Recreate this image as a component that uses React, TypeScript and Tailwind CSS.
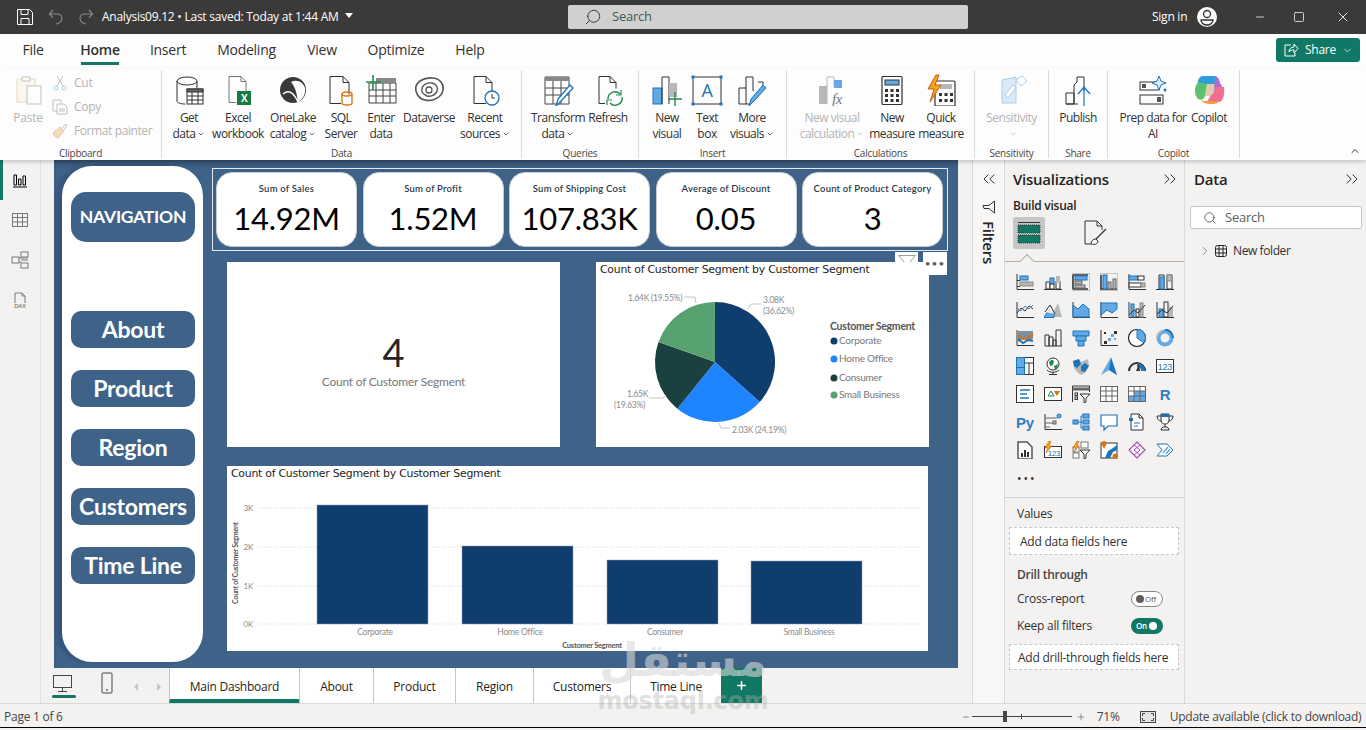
import type { ReactNode } from "react";
import { ChevronDown, ChevronRight, ChevronsLeft, ChevronsRight, ChevronUp, Minus, Plus, Search, Square, X } from "lucide-react";

const k = "#323130";
const b = "#62a9e6";
const d = "#1b75bb";
const g = "#b9b7b5";

function Ico({ s = 32, v = 32, dim = false, children }: { s?: number; v?: number; dim?: boolean; children: ReactNode }) {
  return (
    <svg width={s} height={s} viewBox={`0 0 ${v} ${v}`} fill="none" stroke={k} strokeWidth={1} className={dim ? "opacity-35 shrink-0" : "shrink-0"}>
      {children}
    </svg>
  );
}

const ribbonIcons: Record<string, ReactNode> = {
  getdata: (
    <>
      <path d="M4 7v20c0 1.5 3 3 8 3 M24 7v8" />
      <ellipse cx="14" cy="7" rx="10" ry="4" />
      <rect x="14" y="15" width="16" height="15" fill="#fff" />
      <path d="M14 15h16v3H14z" fill="#666" />
      <path d="M14 22h16M14 26h16M19 18v12M25 18v12" />
    </>
  ),
  excel: (
    <>
      <path d="M7 2.5h12l5 5v13 M7 2.5v26h7 M19 2.5v5h5" stroke="#777" />
      <rect x="15" y="17" width="14" height="14" fill="#177a41" stroke="none" />
      <text x="22" y="28" fontSize="10" fontWeight="700" fill="#fff" stroke="none" textAnchor="middle">X</text>
    </>
  ),
  onelake: (
    <>
      <circle cx="16" cy="16" r="13" fill="#3a3a3a" stroke="none" />
      <path d="M14 8c6-3 12 0 14 6 1 6-2 11-7 14-1-7-2-14-7-20z" fill="#fff" stroke="none" />
      <path d="M6 20c5-4 10-3 15 8" stroke="#fff" strokeWidth={1.5} />
    </>
  ),
  sql: (
    <>
      <path d="M5 2.5h13l6 6v12 M5 2.5v27h11 M18 2.5v6h6" />
      <path d="M17 20v9c0 1 2 2 5 2s5-1 5-2v-9" stroke="#d9730d" strokeWidth={1.3} />
      <ellipse cx="22" cy="20" rx="5" ry="2" stroke="#d9730d" strokeWidth={1.3} />
    </>
  ),
  enter: (
    <>
      <path d="M4 9h27v20H4z" stroke="#444" />
      <path d="M11 4h20v5H11z" fill="#888" stroke="none" />
      <path d="M4 16h27M4 22h27M11 9v20M18 9v20M25 9v20" stroke="#444" />
      <path d="M8 1v15M1 8h15" stroke="#218a4c" strokeWidth={1.6} />
    </>
  ),
  dataverse: (
    <>
      <path d="M3 17C1 8 11 3 20 4c8 1 11 7 10 12-1 7-10 12-18 10-5-1-8-5-9-9z" stroke="#555" strokeWidth={1.6} />
      <path d="M9 17c-1-5 4-9 10-8 5 1 6 5 5 8-1 4-7 6-10 5-2-1-5-3-5-5z" stroke="#555" strokeWidth={1.4} />
      <circle cx="16" cy="16" r="3" stroke="#555" strokeWidth={1.3} />
    </>
  ),
  recent: (
    <>
      <path d="M5 2.5h12l6 6v10 M5 2.5v27h12 M17 2.5v6h6" />
      <circle cx="23" cy="24" r="7" fill="#fff" stroke="#1b75bb" strokeWidth={1.3} />
      <path d="M23 20v4h3" stroke="#333" />
    </>
  ),
  transform: (
    <>
      <path d="M3 3h24v27H3z" stroke="#444" />
      <path d="M3 3h24v4H3z" fill="#888" stroke="none" />
      <path d="M3 14h24M3 21h24M11 7v23M19 7v23" stroke="#444" />
      <path d="M14 32l2-7 12-14 3 3-12 13z" fill="#fff" stroke="#1b75bb" strokeWidth={1.3} />
    </>
  ),
  refresh: (
    <>
      <path d="M7 2.5h11l6 6v6 M7 2.5v27h6 M18 2.5v6h6" />
      <path d="M16 25a7 7 0 0 1 12-5 M30 23a7 7 0 0 1-12 6" stroke="#218a4c" strokeWidth={1.4} />
      <path d="M29 16v5h-5 M15 31v-5h5" stroke="#218a4c" strokeWidth={1.2} />
    </>
  ),
  newvisual: (
    <>
      <rect x="2" y="14" width="9" height="16" fill={b} stroke={d} />
      <path d="M11 30V3h7v27" />
      <rect x="18" y="9" width="8" height="14" fill={g} stroke="none" />
      <path d="M24 18v14M17 25h14" stroke="#218a4c" strokeWidth={1.4} />
    </>
  ),
  textbox: (
    <>
      <rect x="2" y="3" width="28" height="27" stroke="#333" />
      <rect x="0.5" y="1.5" width="3" height="3" fill={d} stroke="none" />
      <rect x="28.5" y="1.5" width="3" height="3" fill={d} stroke="none" />
      <rect x="0.5" y="28.5" width="3" height="3" fill={d} stroke="none" />
      <rect x="28.5" y="28.5" width="3" height="3" fill={d} stroke="none" />
      <text x="16" y="23" fontSize="18" fill={d} stroke="none" textAnchor="middle">A</text>
    </>
  ),
  more: (
    <>
      <path d="M3 30V14h7 M10 30V3h7v14 M22 8h5v6 M3 30h12" />
      <path d="M13 32l2-7 12-14 3 3-12 13z" fill={b} stroke={d} />
    </>
  ),
  newcalc: (
    <>
      <rect x="3" y="12" width="8" height="18" fill={g} stroke="none" />
      <path d="M11 30V3h7v10" stroke={g} />
      <rect x="18" y="6" width="8" height="8" fill={b} stroke="none" />
      <text x="21" y="30" fontSize="15" fontStyle="italic" fontFamily="Liberation Serif" fill="#777" stroke="none" textAnchor="middle">fx</text>
    </>
  ),
  measure: (
    <>
      <rect x="6" y="2.5" width="20" height="28" rx="1" strokeWidth={1.2} />
      <rect x="9" y="6" width="14" height="5" fill={b} stroke="#333" />
      <path d="M9 15h3v3H9zM14.500 15h3v3h-3zM20 15h3v3h-3zM9 20h3v3H9zM14.500 20h3v3h-3zM20 20h3v3h-3zM9 25h3v3H9zM14.500 25h3v3h-3zM20 25h3v3h-3z" fill="#333" stroke="none" />
    </>
  ),
  quick: (
    <>
      <rect x="10" y="7" width="20" height="25" rx="1" strokeWidth={1.2} />
      <rect x="15" y="10" width="12" height="5" fill={g} stroke="none" />
      <path d="M14 19h3v3h-3zM19.500 19h3v3h-3zM25 19h3v3h-3zM14 25h3v3h-3zM19.500 25h3v3h-3zM25 25h3v3h-3z" fill="#333" stroke="none" />
      <path d="M11 1L3 15h6L5 28l11-17h-6l4-10z" fill="#f2a31f" stroke="#c8610e" />
    </>
  ),
  sensitivity: (
    <>
      <path d="M6 6l14-3v26H6z" fill="#d9e9f7" stroke="#a9cdea" />
      <path d="M9 21l8-10 3 2-8 11z" fill="#fff" stroke="#a9cdea" />
      <path d="M20 6l6-4 5 5-6 5z" fill="#fff" stroke="#a9cdea" />
    </>
  ),
  publish: (
    <>
      <path d="M4 30V19h8v11z M12 30V11l3-3V3h7v14 M4 30h12" />
      <path d="M22 32V13M16 20l6-7 6 7" stroke={d} strokeWidth={1.2} />
    </>
  ),
  prep: (
    <>
      <rect x="3" y="8" width="19" height="8" stroke="#333" />
      <rect x="3" y="21" width="23" height="9" stroke="#333" />
      <rect x="5" y="10" width="4" height="4" fill="#555" stroke="none" />
      <rect x="20" y="23" width="4" height="5" fill="#555" stroke="none" />
      <path d="M22 2l2 5 5 2-5 2-2 5-2-5-5-2 5-2z" fill="#d9ecfa" stroke={d} />
      <circle cx="28" cy="16" r="1.500" fill={d} stroke="none" />
    </>
  ),
  copilot: (
    <>
      <path d="M10 2h11c4 0 5 3 6 8H14c-4 0-6 4-7 8L5 8c0-3 2-6 5-6z" fill="#2a9fe0" stroke="none" />
      <path d="M5 8c-4 5-4 13 0 17 3 2 6 0 7-3l2-12-9-2z" fill="#5fbf71" stroke="none" />
      <path d="M21 2c3 0 5 3 6 7 4 5 4 12 1 15l-6 1-1-12 1-9z" fill="#b16bd6" stroke="none" />
      <path d="M22 13h9c1 7-1 15-5 15H14l4-7c3-1 4-5 4-8z" fill="#ee6f93" stroke="none" />
      <path d="M5 22c2 4 6 8 11 8h4c3 0 5-1 6-3H12c-2 0-6-1-7-5z" fill="#f49b3c" stroke="none" />
      <path d="M14 10h8l-1 9-4 3h-5z" fill="#c9a26d" stroke="none" opacity={0.55} />
    </>
  ),
};

type Item = { w: string; icon: string; lines: [string, string?]; caret?: boolean; dim?: boolean };
type Group = { w: string; pl: string; label: string; items: Item[] };

const groups: Group[] = [
  {
    w: "w-[360px]",
    pl: "pl-[7px]",
    label: "Data",
    items: [
      { w: "w-[40px]", icon: "getdata", lines: ["Get", "data"], caret: true },
      { w: "w-[58px]", icon: "excel", lines: ["Excel", "workbook"] },
      { w: "w-[52px]", icon: "onelake", lines: ["OneLake", "catalog"], caret: true },
      { w: "w-[44px]", icon: "sql", lines: ["SQL", "Server"] },
      { w: "w-[36px]", icon: "enter", lines: ["Enter", "data"] },
      { w: "w-[60px]", icon: "dataverse", lines: ["Dataverse"] },
      { w: "w-[52px]", icon: "recent", lines: ["Recent", "sources"], caret: true },
    ],
  },
  {
    w: "w-[117px]",
    pl: "pl-[8px]",
    label: "Queries",
    items: [
      { w: "w-[56px]", icon: "transform", lines: ["Transform", "data"], caret: true },
      { w: "w-[44px]", icon: "refresh", lines: ["Refresh"] },
    ],
  },
  {
    w: "w-[148px]",
    pl: "pl-[8px]",
    label: "Insert",
    items: [
      { w: "w-[40px]", icon: "newvisual", lines: ["New", "visual"] },
      { w: "w-[40px]", icon: "textbox", lines: ["Text", "box"] },
      { w: "w-[50px]", icon: "more", lines: ["More", "visuals"], caret: true },
    ],
  },
  {
    w: "w-[188px]",
    pl: "pl-[8px]",
    label: "Calculations",
    items: [
      { w: "w-[74px]", icon: "newcalc", lines: ["New visual", "calculation"], caret: true, dim: true },
      { w: "w-[46px]", icon: "measure", lines: ["New", "measure"] },
      { w: "w-[52px]", icon: "quick", lines: ["Quick", "measure"] },
    ],
  },
  {
    w: "w-[74px]",
    pl: "pl-[0px]",
    label: "Sensitivity",
    items: [{ w: "w-[73px]", icon: "sensitivity", lines: ["Sensitivity", ""], caret: true, dim: true }],
  },
  {
    w: "w-[59px]",
    pl: "pl-[0px]",
    label: "Share",
    items: [{ w: "w-[58px]", icon: "publish", lines: ["Publish"] }],
  },
  {
    w: "w-[132px]",
    pl: "pl-[6px]",
    label: "Copilot",
    items: [
      { w: "w-[78px]", icon: "prep", lines: ["Prep data for", "AI"] },
      { w: "w-[34px]", icon: "copilot", lines: ["Copilot"] },
    ],
  },
];

function RibbonItem({ item }: { item: Item }) {
  return (
    <div className={`${item.w} flex flex-col items-center shrink-0 tracking-[-0.5px] ${item.dim ? "text-[#b5b3b1]" : "text-[#323130]"}`}>
      <div className="h-[33px] mt-[3px] flex items-center justify-center">
        <Ico>{ribbonIcons[item.icon]}</Ico>
      </div>
      <div className="mt-[4px] text-[12px] leading-[16px] text-center whitespace-nowrap">{item.lines[0]}</div>
      {item.lines[1] !== undefined && (
        <div className="text-[12px] leading-[16px] text-center whitespace-nowrap flex items-center justify-center h-[16px]">
          {item.lines[1]}
          {item.caret && <ChevronDown size={8} strokeWidth={2} className="ml-[2px]" />}
        </div>
      )}
    </div>
  );
}

function Clipboard() {
  return (
    <div className="w-[162px] h-[88px] border-r border-[#dcdad8] flex flex-col shrink-0">
      <div className="flex flex-1 text-[#b5b3b1] text-[12px]">
        <div className="w-[46px] pl-[10px] flex flex-col items-center">
          <div className="h-[33px] mt-[3px] flex items-center">
            <Ico dim>
              <path d="M5 5h18v23H5z" fill="#fbeecf" stroke="#c89b3c" />
              <path d="M10 3h8v4h-8z" fill="#fff" stroke="#555" />
              <rect x="15" y="12" width="14" height="18" fill="#fff" stroke="#555" />
            </Ico>
          </div>
          <div className="mt-[4px] leading-[16px]">Paste</div>
        </div>
        <div className="pl-[6px] flex flex-col gap-[4px] pt-[3px]">
          <div className="flex items-center gap-[6px] h-[20px]">
            <Ico s={16} v={16} dim>
              <path d="M5 1l6 10M11 1L5 11" stroke="#555" />
              <circle cx="4" cy="13" r="2" stroke={d} />
              <circle cx="12" cy="13" r="2" stroke={d} />
            </Ico>
            Cut
          </div>
          <div className="flex items-center gap-[6px] h-[20px]">
            <Ico s={16} v={16} dim>
              <path d="M1 1h8v3M1 1v11h4" stroke="#555" />
              <path d="M5 5h7l3 3v7H5zM7 10h6M7 12h6" stroke="#555" />
            </Ico>
            Copy
          </div>
          <div className="flex items-center gap-[6px] h-[20px] whitespace-nowrap tracking-[-0.4px]">
            <Ico s={16} v={16} dim>
              <path d="M1 10l7-6 4 4-6 7c-2 0-4-2-5-5z" fill="#e8a33a" stroke="#c8610e" />
              <path d="M10 5l4-4 1 1-3 5" stroke="#555" />
            </Ico>
            Format painter
          </div>
        </div>
      </div>
      <div className="text-[10px] leading-[14px] text-center text-[#484644] mb-[-2px]">Clipboard</div>
    </div>
  );
}

function Ribbon() {
  return (
    <div className="h-[92px] bg-[#fdfdfd] shadow-[0_2px_4px_rgba(0,0,0,0.18)] relative z-10 flex pt-[2px] shrink-0">
      <Clipboard />
      {groups.map((gr) => (
        <div key={gr.label} className={`${gr.w} h-[88px] border-r border-[#dcdad8] flex flex-col shrink-0`}>
          <div className={`flex flex-1 ${gr.pl}`}>
            {gr.items.map((it) => (
              <RibbonItem key={it.icon} item={it} />
            ))}
          </div>
          <div className="text-[10px] leading-[14px] text-center text-[#484644] mb-[-2px]">{gr.label}</div>
        </div>
      ))}
      <ChevronUp size={12} strokeWidth={2} className="absolute right-[5px] bottom-[3px] text-[#323130]" />
    </div>
  );
}

function TitleBar() {
  return (
    <div className="h-[34px] bg-[#3b3a39] flex items-center text-white shrink-0 relative">
      <svg width="18" height="18" viewBox="0 0 18 18" fill="none" stroke="#fff" className="ml-[16px] shrink-0">
        <path d="M1.500 1.500h12l3 3v12h-15z M5 1.500v5h7v-5 M5 16.500v-6h8v6" />
      </svg>
      <svg width="16" height="16" viewBox="0 0 16 16" fill="none" stroke="#8a8886" strokeWidth={1.2} className="ml-[14px] shrink-0">
        <path d="M5 1L1.500 5 5 8.500 M2 5h7c3 0 5 2 5 4.500S11 15 8 15" />
      </svg>
      <svg width="16" height="16" viewBox="0 0 16 16" fill="none" stroke="#8a8886" strokeWidth={1.2} className="ml-[14px] shrink-0">
        <path d="M11 1l3.500 4L11 8.500 M14 5H7C4 5 2 7 2 9.500S5 15 8 15" />
      </svg>
      <div className="ml-[8px] text-[12px] whitespace-nowrap w-[243px] font-medium">Analysis09.12 • Last saved: Today at 1:44 AM</div>
      <div className="w-0 h-0 border-x-[4px] border-x-transparent border-t-[5px] border-t-white mb-[4px]" />
      <div className="ml-[215px] w-[400px] h-[24px] bg-[#d2d0ce] rounded-[2px] flex items-center text-[#3b5b57] text-[13px] shrink-0">
        <Search size={18} strokeWidth={1.2} className="ml-[16px] mr-[10px] text-[#323130] -scale-x-100" />
        Search
      </div>
      <div className="ml-[184px] text-[12px] whitespace-nowrap font-medium">Sign in</div>
      <svg width="22" height="22" viewBox="0 0 22 22" className="ml-[9px] shrink-0">
        <circle cx="11" cy="11" r="10" fill="#fff" />
        <circle cx="11" cy="8" r="3.500" fill="none" stroke="#323130" strokeWidth={1.3} />
        <path d="M5 14h12c0 3-3 5-6 5s-6-2-6-5z" fill="none" stroke="#323130" strokeWidth={1.3} />
      </svg>
      <Minus size={12} strokeWidth={1.5} className="ml-[36px]" />
      <Square size={12} strokeWidth={1.5} className="ml-[27px]" />
      <X size={16} strokeWidth={1.3} className="ml-[30px]" />
    </div>
  );
}

const tabs: [string, string][] = [
  ["File", "w-[20px] mr-[38px]"],
  ["Home", "w-[38px] mr-[32px]"],
  ["Insert", "w-[34px] mr-[32px]"],
  ["Modeling", "w-[59px] mr-[31px]"],
  ["View", "w-[30px] mr-[31px]"],
  ["Optimize", "w-[56px] mr-[32px]"],
  ["Help", "w-[28px]"],
];

function MenuTabs() {
  return (
    <div className="h-[34px] bg-[#fdfdfd] flex pl-[23px] text-[14px] text-[#323130] relative shrink-0">
      {tabs.map(([name, cls]) => (
        <div key={name} className={`${cls} h-[31px] flex items-center justify-center whitespace-nowrap shrink-0 ${name === "Home" ? "border-b-[3px] border-[#117865] font-semibold pt-[3px]" : "pt-0"}`}>
          {name}
        </div>
      ))}
      <div className="absolute right-[6px] top-[4px] w-[84px] h-[24px] bg-[#117865] rounded-[3px] text-white text-[12px] flex items-center justify-center gap-[6px]">
        <svg width="16" height="16" viewBox="0 0 16 16" fill="none" stroke="#fff">
          <path d="M8 3H2v11h10v-3 M6 10c0-3 2-5 5-5V2l4 4.500L11 11V8c-2 0-4 0-5 2z" />
        </svg>
        Share
        <ChevronDown size={11} strokeWidth={1.5} />
      </div>
    </div>
  );
}

const kpis = [
  ["Sum of Sales", "14.92M"],
  ["Sum of Profit", "1.52M"],
  ["Sum of Shipping Cost", "107.83K"],
  ["Average of Discount", "0.05"],
  ["Count of Product Category", "3"],
];

const navItems = ["About", "Product", "Region", "Customers", "Time Line"];

const pieData = [
  { pct: 36.62, color: "#0f3d6e" },
  { pct: 24.19, color: "#1e84ff" },
  { pct: 19.63, color: "#1a4140" },
  { pct: 19.55, color: "#58a272" },
];

function pieSlices(cx: number, cy: number, r: number) {
  let a = 0;
  return pieData.map((s) => {
    const a0 = a;
    a += (s.pct / 100) * Math.PI * 2;
    const x0 = cx + r * Math.sin(a0);
    const y0 = cy - r * Math.cos(a0);
    const x1 = cx + r * Math.sin(a);
    const y1 = cy - r * Math.cos(a);
    return { color: s.color, d: `M${cx} ${cy}L${x0} ${y0}A${r} ${r} 0 ${s.pct > 50 ? 1 : 0} 1 ${x1} ${y1}Z` };
  });
}

function PieCard() {
  const lbl = { fontSize: 8.5, fill: "#8a8a8a" };
  const leg = { fontSize: 10, fill: "#777" };
  return (
    <svg width="333" height="185" className="bg-white font-['Lato',sans-serif] shrink-0">
      <text x="4" y="11" fontSize="10.900" fill="#252423" fontFamily="DejaVu Sans">Count of Customer Segment by Customer Segment</text>
      {pieSlices(119, 100, 60).map((s) => (
        <path key={s.color} d={s.d} fill={s.color} />
      ))}
      <g fill="none" stroke="#c8c6c4">
        <path d="M152 47l3-5h10" />
        <path d="M88 35h11l1 6" />
        <path d="M53 136h14l3-3" />
        <path d="M123 161l2 5h9" />
      </g>
      <text x="167" y="41" {...lbl}>3.08K</text>
      <text x="167" y="52" {...lbl}>(36.62%)</text>
      <text x="32" y="39" {...lbl}>1.64K (19.55%)</text>
      <text x="31" y="135" {...lbl}>1.65K</text>
      <text x="18" y="146" {...lbl}>(19.63%)</text>
      <text x="136" y="171" {...lbl}>2.03K (24.19%)</text>
      <text x="234" y="68" fontSize="10.500" fontWeight="700" fill="#555">Customer Segment</text>
      {[
        ["Corporate", 79, "#0f3d6e"],
        ["Home Office", 97, "#1e84ff"],
        ["Consumer", 116, "#1a4140"],
        ["Small Business", 133, "#58a272"],
      ].map(([name, y, c]) => (
        <g key={name as string}>
          <circle cx="238" cy={y as number} r="3.500" fill={c as string} />
          <text x="243" y={(y as number) + 3} {...leg}>{name}</text>
        </g>
      ))}
    </svg>
  );
}

function BarCard() {
  const bars = [
    { x: 90, top: 39, name: "Corporate" },
    { x: 235, top: 80, name: "Home Office" },
    { x: 380, top: 94, name: "Consumer" },
    { x: 524, top: 95, name: "Small Business" },
  ];
  const ticks = [
    ["3K", 42],
    ["2K", 81],
    ["1K", 120],
    ["0K", 158],
  ] as const;
  return (
    <svg width="701" height="185" className="bg-white font-['Lato',sans-serif] shrink-0">
      <text x="4" y="11" fontSize="10.900" fill="#252423" fontFamily="DejaVu Sans">Count of Customer Segment by Customer Segment</text>
      {ticks.map(([label, y]) => (
        <g key={label}>
          <line x1="32" x2="695" y1={y} y2={y} stroke="#d5d3d1" strokeDasharray="1 2" />
          <text x="26" y={y + 3} fontSize="8" fill="#8a8a8a" textAnchor="end">{label}</text>
        </g>
      ))}
      {bars.map((bar) => (
        <g key={bar.name}>
          <rect x={bar.x} y={bar.top} width="111" height={158 - bar.top} fill="#0f3d6e" stroke="#8ca3bd" strokeWidth={0.5} />
          <text x={bar.x + 58} y="169" fontSize="8.500" fill="#8a8a8a" textAnchor="middle">{bar.name}</text>
        </g>
      ))}
      <text x="365" y="182" fontSize="7.500" fontWeight="700" fill="#555" textAnchor="middle">Customer Segment</text>
      <text transform="translate(11 97) rotate(-90)" fontSize="7" fontWeight="700" fill="#555" textAnchor="middle">Count of Customer Segment</text>
    </svg>
  );
}

function ReportPage() {
  return (
    <div className="w-[904px] h-[508px] bg-[#3f6289] relative flex pl-[8px] pt-[6px] gap-[9px] font-['Lato',sans-serif] shadow-[inset_0_6px_6px_-3px_rgba(0,0,0,0.25)]">
      <div className="w-[141px] h-[496px] bg-white rounded-[30px] pl-[9px] pt-[26px] flex flex-col items-start shadow-[-6px_0_3px_rgba(30,50,80,0.25)]">
        <div className="w-[124px] h-[50px] bg-[#3f6289] rounded-[15px] text-white font-bold text-[17.500px] flex items-center justify-center mb-[69px]">NAVIGATION</div>
        <div className="flex flex-col gap-[22px]">
          {navItems.map((n) => (
            <div key={n} className="w-[124px] h-[37px] bg-[#3f6289] rounded-[10px] text-white font-bold text-[23px] flex items-center justify-center whitespace-nowrap">
              {n}
            </div>
          ))}
        </div>
      </div>
      <div className="w-[736px]">
        <div className="mt-[2px] h-[83px] border border-[#e4e8ee] flex items-center pl-[3px] gap-[5.500px]">
          {kpis.map(([label, val]) => (
            <div key={label} className="w-[141px] h-[75px] bg-white rounded-[16px] border border-[#c8ccd2] flex flex-col items-center shrink-0">
              <div className="mt-[9px] text-[9.500px] font-semibold text-[#2b3a4a] tracking-[0.2px] whitespace-nowrap">{label}</div>
              <div className="text-[31px] leading-[38px] mt-[3px] text-black whitespace-nowrap">{val}</div>
            </div>
          ))}
        </div>
        <div className="pl-[15px] pt-[11px]">
          <div className="flex gap-[36px]">
            <div className="w-[333px] h-[185px] bg-white flex flex-col items-center justify-center shrink-0 pt-[16px]">
              <div className="text-[38px] leading-[42px] text-[#252423] mt-[-4px]">4</div>
              <div className="text-[12px] text-[#777] whitespace-nowrap">Count of Customer Segment</div>
            </div>
            <PieCard />
          </div>
          <div className="mt-[19px]">
            <BarCard />
          </div>
        </div>
      </div>
      <div className="absolute left-[841px] top-[92px] w-[23px] h-[10px] bg-white flex justify-center overflow-hidden">
        <svg width="20" height="12" viewBox="0 0 20 12" fill="none" stroke="#a19f9d" className="mt-[3px]">
          <path d="M1.500 .5h17L12 8v4H8V8z" />
        </svg>
      </div>
      <div className="absolute left-[869px] top-[92px] w-[24px] h-[23px] bg-white flex items-center justify-center text-[#605e5c] text-[10px] tracking-[1px]">•••</div>
    </div>
  );
}

const A = <path d="M1 1v15.500h17" stroke={k} />;
const vizIcons: ReactNode[] = [
  <>{A}<rect x="4" y="3" width="8" height="4" fill={b} stroke={d} /><rect x="4" y="9" width="13" height="4" fill={g} stroke="#888" /><path d="M1 7.500h3M1 13.500h3" /></>,
  <><path d="M0 16.500h18" /><path d="M2 16V9h4v7zM12 16V8h4v8z" /><rect x="6" y="5" width="4" height="6" fill={b} stroke={d} /><rect x="12" y="3" width="4" height="7" fill={g} stroke="none" /><rect x="6" y="11" width="4" height="5" fill="#fff" /></>,
  <><rect x="0" y="0" width="18" height="18" fill="none" stroke={g} strokeWidth={1.5} /><path d="M1 2h15M1 16h15M1 2v14" strokeWidth={1.5} /><rect x="3" y="3" width="12" height="4" fill={b} stroke={d} /><rect x="3" y="8" width="7" height="3" fill={g} stroke="#666" /><rect x="3" y="12" width="10" height="3" fill={g} stroke="#666" /></>,
  <><rect x="0" y="0" width="18" height="18" fill="none" stroke={g} strokeWidth={1.5} /><path d="M1 2v14h16" strokeWidth={1.5} /><rect x="3" y="2" width="4" height="14" fill={b} stroke={d} /><rect x="8" y="9" width="3" height="7" fill={g} stroke="#666" /><rect x="13" y="6" width="3" height="10" fill={g} stroke="#666" /></>,
  <>{A}<rect x="1" y="3" width="9" height="4" fill={b} stroke={d} /><rect x="10" y="3" width="6" height="4" fill="#fff" /><rect x="1" y="10" width="12" height="4" fill="#fff" /><rect x="13" y="10" width="4" height="4" fill={g} stroke="#888" /></>,
  <><path d="M0 16.500h18" /><path d="M3 16V2h5v14zM11 16V2h5v14z" /><rect x="4" y="4" width="4" height="12" fill={b} stroke={d} /><rect x="11" y="2" width="5" height="6" fill={g} stroke="#888" /></>,

  <>{A}<path d="M1 12l4-5 4 3 4-5 4 3" stroke={k} /><path d="M1 7l4 3 4-5 4 3 4-4" stroke="#4a86c5" /></>,
  <><path d="M1 16l5-11 4 5 4-8 4 14z" fill={g} stroke="none" /><path d="M0 16.500l5-8 5 4v4z" fill={b} stroke={d} /><path d="M1 11l5-7 5 9" stroke={k} fill="#fff" fillOpacity={0.8} /></>,
  <>{A}<path d="M1 4l5 4 5-5 6 5v8H1z" fill={b} stroke={d} /></>,
  <>{A}<path d="M1 2h16v6l-5 4-5-3-6 5z" fill={b} stroke={d} /></>,
  <>{A}<rect x="3" y="3" width="3" height="13" fill={b} stroke={d} /><rect x="8" y="8" width="3" height="8" /><rect x="12" y="2" width="3" height="14" fill={g} stroke="#888" /><path d="M1 14l5-5 4 3 7-8" /></>,
  <>{A}<rect x="3" y="8" width="4" height="8" fill={b} stroke={d} /><rect x="8" y="1" width="4" height="15" /><rect x="13" y="6" width="4" height="10" fill={g} stroke="none" /><path d="M1 13l5-4 5 3 6-7" /></>,

  <>{A}<path d="M2 2h15v8l-5 2-5-2-5 3z" fill="#7a8ea6" stroke="none" /><path d="M2 6l5 4 5-1 5-4" stroke="#d9730d" strokeWidth={2} /><path d="M2 10l5 4 5-3 5 1" stroke={d} strokeWidth={2} /></>,
  <><path d="M1 17V6h4v11M5 17V8h4v9M9 17v-6h3v6M12 17V1h5v16M1 17h17" /></>,
  <><path d="M1 2h16v5H1z" fill={b} stroke={d} /><path d="M4 7h10v5H4z" fill={b} stroke={d} /><path d="M6 12h6v5H6z" fill={b} stroke={d} /></>,
  <>{A}<rect x="4" y="12" width="3" height="3" fill={k} stroke="none" /><rect x="11" y="5" width="3" height="3" fill={b} stroke="none" /><rect x="8" y="9" width="3" height="3" fill={b} stroke="none" /><rect x="14" y="9" width="2" height="2" fill={b} stroke="none" /><rect x="14" y="2" width="3" height="3" fill={k} stroke="none" /><rect x="4" y="3" width="2" height="2" fill={k} stroke="none" /></>,
  <><circle cx="9" cy="9" r="8.500" fill="#fff" strokeWidth={1.2} /><path d="M9 9V.5A8.500 8.500 0 0 1 16 14z" fill={b} stroke={d} /></>,
  <><circle cx="9" cy="9" r="6.500" fill="none" stroke={b} strokeWidth={4} /><path d="M9 .5A8.500 8.500 0 0 1 17 9" stroke={d} strokeWidth={2} /><path d="M1 9a8 8 0 0 1 5-7" stroke={g} strokeWidth={2} /></>,

  <><rect x=".5" y=".5" width="17" height="17" fill="#fff" /><rect x=".5" y=".5" width="8" height="10" fill={b} stroke={d} /><rect x=".5" y="10.500" width="8" height="7" fill={b} stroke={d} /><path d="M8.500 6h9M13 6v12" /></>,
  <><circle cx="9" cy="7" r="6" fill="#fff" /><path d="M5 5c2-3 4-2 5-1l-1 4-3 1zM10 9l4-2-1 5-2 1z" fill="#218a4c" stroke="none" /><path d="M3 13c3 3 9 3 12 0M9 15v2M5 17.500h8" /></>,
  <><path d="M1 4l6-2 2 3 7-3 1 7-4 7-4 2-4-3-3-4z" fill={g} stroke="none" /><path d="M1 4l6-2 2 5-4 4-3-2z" fill={d} stroke="none" /><path d="M9 9l4-3 4 3-4 6-4-1z" fill={d} stroke="none" /></>,
  <><path d="M11 0L17 18l-8-5-8 5z" fill={b} stroke="none" /><path d="M11 1L9 13l8 5z" fill={d} stroke="none" /></>,
  <><path d="M1 14a8 8 0 0 1 16 0" fill="none" stroke={k} strokeWidth={2} /><path d="M9 6a8 8 0 0 1 8 8h-4a4 4 0 0 0-4-4z" fill={d} stroke="none" /><path d="M8 14l3-7 1 7z" fill={k} stroke="none" /></>,
  <><rect x=".5" y="2.500" width="17" height="13" fill="#fff" /><text x="9" y="13" fontSize="9" fill={d} stroke="none" textAnchor="middle" fontFamily="Liberation Sans">123</text></>,

  <><rect x=".5" y=".5" width="17" height="17" fill="#fff" /><path d="M4 5h10M4 9h7M4 13h9" stroke={d} strokeWidth={1.6} /></>,
  <><rect x=".5" y="2.500" width="17" height="13" fill="#fff" /><path d="M4 11l3-5 3 5z" fill="none" stroke="#218a4c" /><path d="M10 6h6l-3 5z" fill="#d9730d" stroke="none" /></>,
  <><path d="M.5 17V1h17v6" /><path d="M.5 4h17" strokeWidth={3} stroke="#666" /><rect x="3" y="8" width="2.500" height="2.500" /><rect x="3" y="12" width="2.500" height="2.500" /><path d="M8 9h10l-4 4v4l-2 1v-5z" fill="#fff" /></>,
  <><rect x=".5" y="1.500" width="17" height="15" fill="#fff" stroke="#666" /><path d="M.5 6h17M.5 11h17M6 1.500v15M12 1.500v15" stroke="#666" /></>,
  <><rect x=".5" y="1.500" width="17" height="15" fill="#fff" stroke="#666" /><rect x="6" y="6" width="11" height="10" fill={b} stroke="none" /><rect x="1" y="11" width="5" height="5" fill={b} stroke="none" /><path d="M.5 6h17M.5 11h17M6 1.500v15M12 1.500v15" stroke="#666" /></>,
  <text x="9" y="15" fontSize="15" fontWeight="700" fill="#2f7fc4" stroke="none" textAnchor="middle" fontFamily="Liberation Sans">R</text>,

  <text x="9" y="15" fontSize="15" fontWeight="700" fill="#2f7fc4" stroke="none" textAnchor="middle" fontFamily="Liberation Sans">Py</text>,
  <>{A}<circle cx="15" cy="3" r="2" fill={b} stroke={d} /><path d="M1 5h12M1 10h8M1 14h5" stroke="#666" /><rect x="9" y="8" width="3" height="3" fill={g} stroke="#666" /></>,
  <><rect x="1" y="7" width="5" height="4" fill={b} stroke={d} /><path d="M6 9h3M9 3v12M9 3h2M9 9h2M9 15h2" stroke={d} /><rect x="11" y="1" width="6" height="4" fill={b} stroke={d} /><rect x="11" y="7" width="6" height="4" fill={b} stroke={d} /><rect x="11" y="13" width="6" height="4" fill={b} stroke={d} /></>,
  <path d="M1 2h16v11H8l-4 4v-4H1z" fill="#fff" stroke={d} strokeWidth={1.2} />,
  <><path d="M3 1h8l4 4v12H3zM11 1v4h4" fill="#fff" /><rect x="1" y="5" width="4" height="3" fill={d} stroke="none" /><path d="M6 10h6M6 13h4" stroke={d} /></>,
  <><path d="M5 1h8v6c0 3-2 4-4 4S5 10 5 7z" fill="#fff" /><path d="M5 1h8v3H5z" fill={d} stroke="none" /><path d="M5 3H1c0 3 2 5 4 5M13 3h4c0 3-2 5-4 5M9 11v3M5 17v-1l2-2h4l2 2v1z" /></>,

  <><path d="M2 1h9l5 5v12H2z" fill="#fff" stroke="#555" strokeWidth={1.5} /><rect x="5" y="12" width="2" height="4" fill={k} stroke="none" /><rect x="8" y="9" width="2" height="7" fill={k} stroke="none" /><rect x="11" y="11" width="2" height="5" fill={k} stroke="none" /></>,
  <><rect x=".5" y="5.500" width="17" height="11" fill="#fff" /><text x="10" y="15" fontSize="8" fill={d} stroke="none" textAnchor="middle" fontFamily="Liberation Sans">123</text><path d="M5 0L1 7h3L2 12l6-7H5l2-5z" fill="#f2a31f" stroke="#c8610e" strokeWidth={0.6} /></>,
  <><rect x="1" y="6" width="6" height="5" fill="#fff" stroke="#777" /><rect x="1" y="12" width="6" height="5" fill="#fff" stroke="#777" /><rect x="9" y="1" width="7" height="6" fill="#fff" stroke="#777" /><path d="M8 9h10l-4 4v4l-2 1v-5z" fill="#fff" /><path d="M5 0L1 7h3L2 11l5-6H5l2-5z" fill="#f2a31f" stroke="#c8610e" strokeWidth={0.6} /></>,
  <><rect x="1" y="2" width="16" height="15" fill="#fff" stroke="#333" /><path d="M5 17l3-7 5-3 4-3v5l-4 2-3 6z" fill={d} stroke="none" /><path d="M4 0a2.500 2.500 0 0 1 2.500 3L4 8 1.500 3A2.500 2.500 0 0 1 4 0z" fill="#d9730d" stroke="none" /><circle cx="15" cy="15" r="2.500" fill="#d9730d" stroke="none" /></>,
  <><path d="M9 1l8 8-8 8-8-8z" fill="#fff" stroke="#a24bb5" strokeWidth={1.2} /><path d="M6 4l6 5-6 5M12 4L6 9l6 5" stroke="#a24bb5" /></>,
  <><path d="M1 3h10l6 6-6 6H1l5-6z" fill="#fff" stroke={d} /><path d="M7 12l5-6M10 13l4-5" stroke={b} strokeWidth={1.5} /></>,
];

function VizPanel() {
  return (
    <div className="w-[180px] h-[543px] bg-[#f3f2f1] border-r border-[#dcdad8] flex flex-col shrink-0 relative">
      <div className="h-[38px] pl-[8px] pr-[4px] flex items-center justify-between">
        <span className="text-[15px] font-semibold text-[#252423]">Visualizations</span>
        <ChevronsRight size={20} strokeWidth={1.2} className="text-[#323130]" />
      </div>
      <div className="pl-[8px] text-[12px] leading-[16px] font-semibold text-[#252423]">Build visual</div>
      <div className="flex items-center pl-[8px] mt-[3px]">
        <div className="w-[32px] h-[32px] bg-[#c8c6c4] rounded-[2px] flex items-center justify-center">
          <svg width="24" height="24" viewBox="0 0 24 24" fill="none">
            <path d="M1 1.500h22" stroke="#333" />
            <rect x="1" y="4" width="22" height="8" fill="#117865" stroke="#333" strokeDasharray="1 1" />
            <rect x="1" y="14" width="22" height="8" fill="#117865" stroke="#333" strokeDasharray="1 1" />
          </svg>
        </div>
        <svg width="26" height="28" viewBox="0 0 26 28" fill="none" stroke="#333" className="ml-[37px]">
          <path d="M3 25V2h12l5 5v4 M15 2v5h5 M3 25h6" />
          <path d="M24 10L14 20" strokeWidth={1.2} />
          <path d="M9 25c0-3 2-5 5-5l2 2c0 3-3 4-7 3z" fill="#fff" />
        </svg>
      </div>
      <div className="mt-[12px] h-[1px] bg-[#b3b0ad] relative">
        <div className="absolute left-[17px] top-[-5px] w-[10px] h-[10px] rotate-45 bg-[#f3f2f1] border-l border-t border-[#b3b0ad]" />
      </div>
      <div className="mt-[11px] ml-[11px] grid grid-cols-[repeat(6,18px)] auto-rows-[18px] gap-x-[10px] gap-y-[10px]">
        {vizIcons.map((ic, i) => (
          <Ico key={i} s={18} v={18}>{ic}</Ico>
        ))}
      </div>
      <div className="ml-[12px] mt-[12px] text-[#323130] text-[12px] leading-[16px] tracking-[2px]">•••</div>
      <div className="mt-[10px] h-[1px] bg-[#d2d0ce]" />
      <div className="pl-[12px] pt-[8px] text-[12px] leading-[16px] text-[#323130]">Values</div>
      <div className="ml-[4px] mt-[5px] w-[170px] h-[28px] bg-white border border-dashed border-[#c8c6c4] flex items-center pl-[10px] pt-[1px] text-[12px] text-[#323130]">Add data fields here</div>
      <div className="pl-[12px] pt-[12px] text-[12px] leading-[16px] font-semibold text-[#484644]">Drill through</div>
      <div className="pl-[12px] pr-[21px] mt-[8px] h-[16px] flex items-center justify-between text-[12px] text-[#323130]">
        Cross-report
        <div className="w-[32px] h-[16px] rounded-full border border-[#8a8886] bg-white flex items-center pl-[4px] gap-[1px] text-[8px] text-[#605e5c]">
          <span className="w-[8px] h-[8px] rounded-full bg-[#605e5c]" />
          Off
        </div>
      </div>
      <div className="pl-[12px] pr-[21px] mt-[11px] h-[16px] flex items-center justify-between text-[12px] text-[#323130]">
        Keep all filters
        <div className="w-[32px] h-[16px] rounded-full bg-[#117865] flex items-center pl-[5px] gap-[2px] text-[8px] text-white font-semibold">
          On
          <span className="w-[8px] h-[8px] rounded-full bg-white" />
        </div>
      </div>
      <div className="ml-[4px] mt-[10px] w-[170px] h-[26px] bg-white border border-dashed border-[#c8c6c4] flex items-center pl-[8px] pt-[1px] text-[12px] text-[#323130] whitespace-nowrap">Add drill-through fields here</div>
    </div>
  );
}

function DataPanel() {
  return (
    <div className="w-[181px] h-[543px] bg-[#f3f2f1] shrink-0">
      <div className="h-[38px] pl-[9px] pr-[4px] flex items-center justify-between">
        <span className="text-[15px] font-semibold text-[#252423]">Data</span>
        <ChevronsRight size={20} strokeWidth={1.2} className="text-[#323130]" />
      </div>
      <div className="ml-[5px] mt-[8px] w-[172px] h-[23px] bg-white border border-[#c8c6c4] rounded-[3px] flex items-center pl-[12px] text-[13px] text-[#605e5c]">
        <Search size={14} strokeWidth={1.2} className="mr-[8px] text-[#323130]" />
        Search
      </div>
      <div className="mt-[12px] pl-[13px] h-[20px] flex items-center text-[12px] text-[#323130]">
        <ChevronRight size={14} strokeWidth={1.2} className="text-[#605e5c]" />
        <svg width="12" height="12" viewBox="0 0 12 12" fill="none" stroke="#252423" className="ml-[3px] mr-[6px]">
          <rect x=".5" y=".5" width="11" height="11" rx="2" />
          <path d="M4 .5v11M8 .5v11M.5 4h11M.5 8h11" />
        </svg>
        <span className="tracking-[-0.4px]">New folder</span>
      </div>
    </div>
  );
}

function FiltersRail() {
  return (
    <div className="w-[33px] h-[543px] bg-[#f8f7f6] border-x border-[#dcdad8] shrink-0 flex flex-col items-center pt-[9px]">
      <ChevronsLeft size={20} strokeWidth={1.2} className="text-[#323130]" />
      <svg width="14" height="14" viewBox="0 0 14 14" fill="none" stroke="#323130" className="mt-[11px] rotate-90">
        <path d="M1 1.500h12L8.500 7v5l-3 1V7z" />
      </svg>
      <div className="mt-[7px] [writing-mode:vertical-rl] text-[15px] font-semibold text-[#252423]">Filters</div>
    </div>
  );
}

function LeftRail() {
  return (
    <div className="w-[41px] h-[543px] bg-[#f3f2f1] border-r border-[#e1dfdd] shrink-0 flex flex-col items-center relative">
      <div className="absolute left-0 top-0 w-[3px] h-[40px] bg-[#117865]" />
      <div className="mt-[12px] h-[18px]">
        <svg width="16" height="16" viewBox="0 0 16 16" fill="none" stroke="#000">
          <path d="M1 15h14M2 13V3h2.500v10zM6.500 13V7H9v6zM11 13V4h2.500v9z" />
        </svg>
      </div>
      <div className="mt-[21px]">
        <svg width="18" height="18" viewBox="0 0 18 18" fill="none" stroke="#7a7876">
          <rect x="1.500" y="2.500" width="15" height="13" />
          <path d="M1.500 6.500h15M1.500 11h15M6.500 2.500v13M11.500 2.500v13" />
        </svg>
      </div>
      <div className="mt-[22px]">
        <svg width="18" height="18" viewBox="0 0 18 18" fill="none" stroke="#7a7876">
          <rect x="1" y="6" width="7" height="6" />
          <rect x="10" y="1" width="7" height="5" />
          <rect x="10" y="12" width="7" height="5" />
          <path d="M8 7h2M8 11h2M10 7h7M10 9h7" />
        </svg>
      </div>
      <div className="mt-[23px]">
        <svg width="18" height="18" viewBox="0 0 18 18" fill="none" stroke="#7a7876">
          <path d="M4 11V1h7l3 3v7 M11 1v3h3" />
          <text x="9" y="16" fontSize="6" fill="#605e5c" stroke="none" textAnchor="middle" fontFamily="Liberation Sans">DAX</text>
        </svg>
      </div>
    </div>
  );
}

const pageTabs: [string, string][] = [
  ["About", "w-[74px]"],
  ["Product", "w-[82px]"],
  ["Region", "w-[78px]"],
  ["Customers", "w-[97px]"],
  ["Time Line", "w-[91px]"],
];

function PageTabs() {
  return (
    <div className="h-[35px] flex bg-[#f3f2f1] text-[12px] text-[#252423]">
      <div className="w-[128px] flex items-start shrink-0 relative">
        <svg width="22" height="20" viewBox="0 0 22 20" fill="none" stroke="#484644" className="ml-[11px] mt-[6px]">
          <rect x="1.500" y="1.500" width="18" height="12" />
          <path d="M10.500 13.500v4M6 17.500h9" />
        </svg>
        <div className="absolute left-[11px] bottom-[5px] w-[24px] h-[3px] rounded-full bg-[#117865]" />
        <svg width="12" height="22" viewBox="0 0 12 22" fill="none" stroke="#484644" className="ml-[27px] mt-[4px]">
          <rect x="1" y="1" width="10" height="20" rx="1" />
          <circle cx="6" cy="18" r=".5" />
        </svg>
        <svg width="8" height="10" viewBox="0 0 8 10" fill="#c8c6c4" className="ml-[19px] mt-[14px]">
          <path d="M6 1L2 5l4 4z" />
        </svg>
        <svg width="8" height="10" viewBox="0 0 8 10" fill="#c8c6c4" className="ml-[15px] mt-[14px]">
          <path d="M2 1l4 4-4 4z" />
        </svg>
      </div>
      <div className="w-[130px] bg-white border-b-[4px] border-b-[#117865] border-l border-l-[#c8c6c4] flex items-center justify-center font-medium shrink-0 pt-[6px]">Main Dashboard</div>
      {pageTabs.map(([name, w]) => (
        <div key={name} className={`${w} bg-white border-l border-[#c8c6c4] flex items-center justify-center shrink-0 pt-[3px]`}>{name}</div>
      ))}
      <div className="w-[41px] bg-[#117865] flex items-center justify-center text-white shrink-0">
        <Plus size={13} strokeWidth={3} />
      </div>
    </div>
  );
}

function StatusBar() {
  return (
    <div className="h-[27px] shrink-0 bg-[#f3f2f1]">
      <div className="h-[24px] border-t border-[#dcdad8] flex items-center text-[12px] text-[#484644] relative pt-[2px]">
        <span className="ml-[4px]">Page 1 of 6</span>
        <Minus size={8} strokeWidth={2} className="ml-[899px] text-[#484644]" />
        <div className="ml-[2px] w-[100px] h-[1px] bg-[#484644] relative">
          <div className="absolute left-[31px] top-[-5px] w-[4px] h-[11px] bg-[#484644]" />
          <div className="absolute left-[49px] top-[-2px] w-[1px] h-[5px] bg-[#484644]" />
        </div>
        <Plus size={10} strokeWidth={1.3} className="ml-[4px]" />
        <span className="ml-[11px] w-[24px]">71%</span>
        <svg width="16" height="12" viewBox="0 0 16 12" fill="none" stroke="#484644" className="ml-[19px]">
          <rect x=".5" y=".5" width="15" height="11" fill="#e6e4e2" />
          <path d="M2.500 5V2.500H5M11 2.500h2.500V5M13.500 7v2.500H11M5 9.500H2.500V7" />
        </svg>
        <span className="ml-[14px] whitespace-nowrap">Update available (click to download)</span>
      </div>
      <div className="h-[1px] bg-black" />
    </div>
  );
}

export default function App() {
  return (
    <div className="w-[1366px] h-[730px] overflow-hidden bg-[#f3f2f1] flex flex-col relative font-['Open_Sans',sans-serif] tracking-[-0.25px]">
      <TitleBar />
      <MenuTabs />
      <Ribbon />
      <div className="flex h-[543px] shrink-0">
        <LeftRail />
        <div className="w-[931px] shrink-0 flex flex-col">
          <div className="h-[508px] pl-[13px] bg-[#f3f2f1]">
            <ReportPage />
          </div>
          <PageTabs />
        </div>
        <FiltersRail />
        <VizPanel />
        <DataPanel />
      </div>
      <StatusBar />
      <div className="absolute left-[598px] top-[630px] w-[170px] flex flex-col items-center pointer-events-none font-['DejaVu_Sans',sans-serif]">
        <div className="text-[46px] leading-[60px] font-bold text-[#d8d8d8]/60">مستقل</div>
        <div className="text-[24px] leading-[26px] font-bold -mt-[2px] text-[#b0b0b0]/40 whitespace-nowrap">mostaql.com</div>
      </div>
    </div>
  );
}
